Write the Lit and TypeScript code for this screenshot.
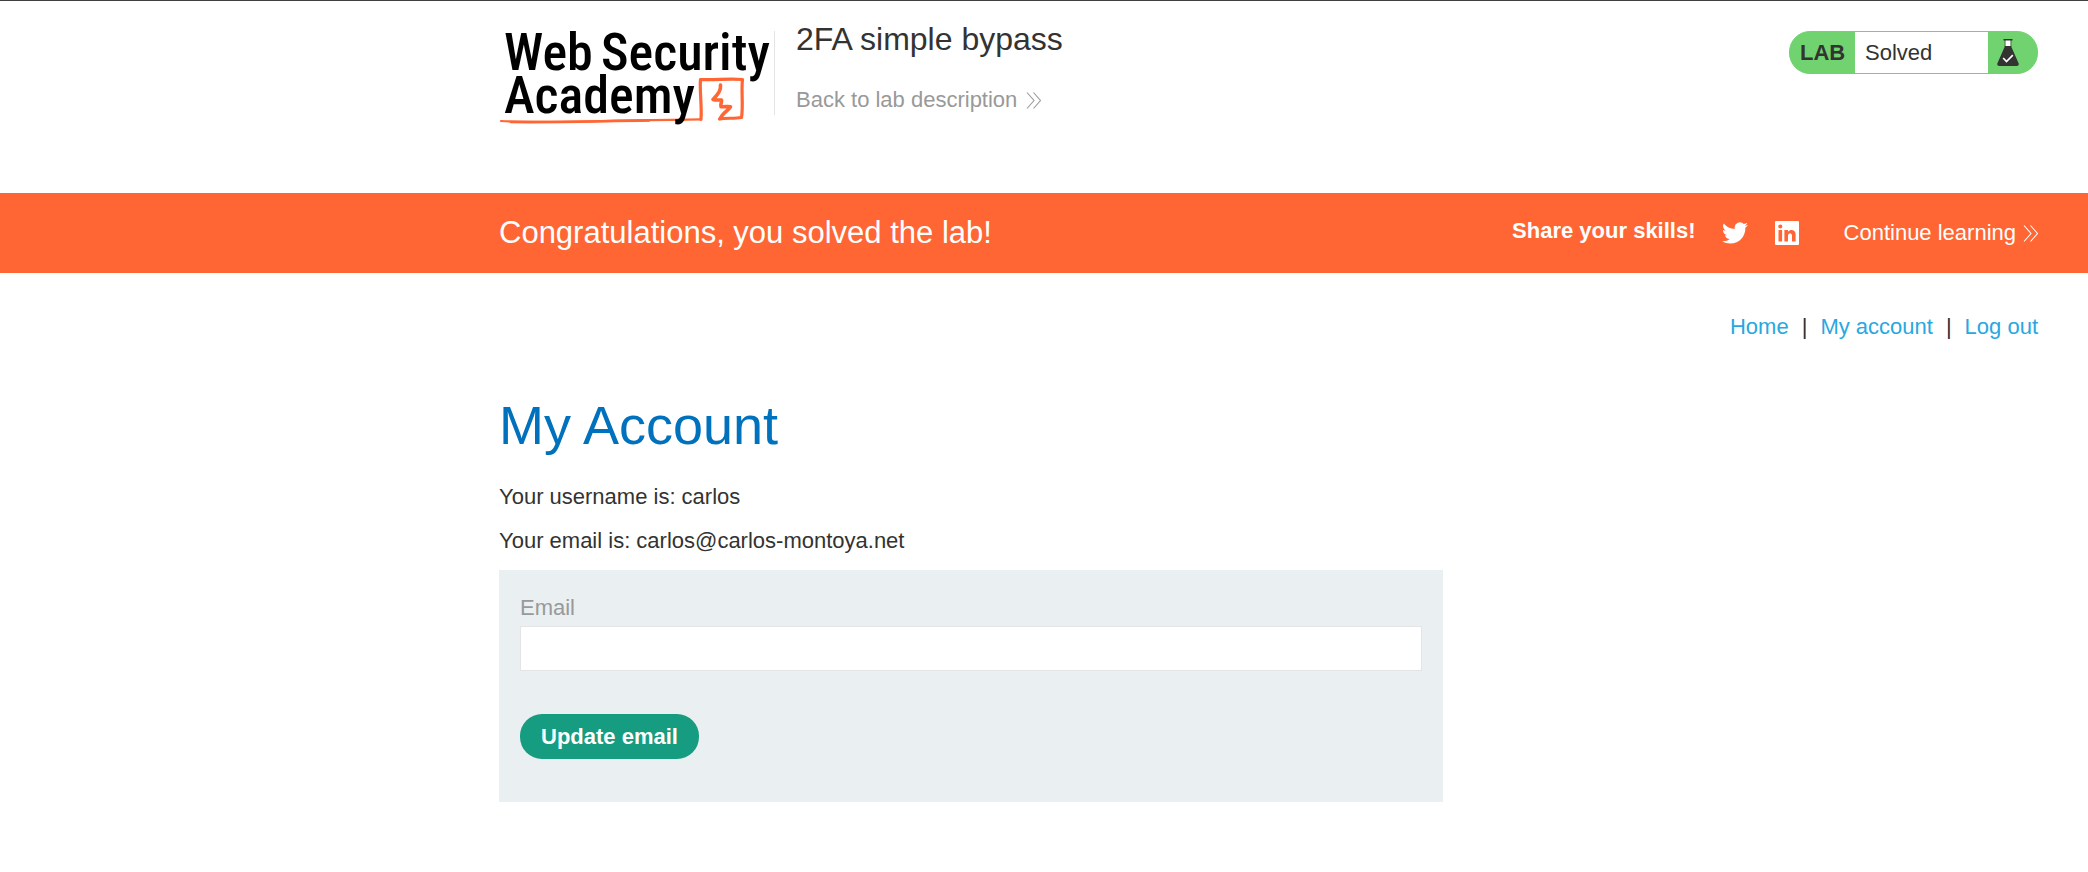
import { LitElement, html, css, svg } from "lit";
import { customElement, state } from "lit/decorators.js";

const chevrons = html`<svg class="chevrons" viewBox="0 0 15 17" aria-hidden="true">
  <path d="M1 .5 8 8.500 1 16.500M7.500 .5l7 8-7 8" fill="none" stroke="currentColor" stroke-width="1.100" />
</svg>`;

const scribble = svg`
  <g fill="none" stroke="#ff6633" stroke-linejoin="round" stroke-linecap="round">
    <path d="M2 90C50 92.500 130 89 202 88.300" stroke-width="2.200" />
    <path d="M12 91C60 91.600 100 90 150 89.400" stroke-width="2.600" />
    <path d="M202 88.300C203 75 200.500 60 201.500 48.500C215 49.500 230 47 243.500 48.500C242 60 244.500 74 242.500 86.500C235 88 227 86.500 220.500 88" stroke-width="3.200" />
    <path d="M221.500 54c.8 6-3.500 10-7.500 14.500 3 .8 6 .3 8.500 .6.500 2.500-1.500 4.500-.5 6.500 3.500 .4 6.500-.3 9.500 .2-2.500 4-8.500 6.500-10 11.500" stroke-width="3.600" />
  </g>`;

@customElement("app-root")
export class AppRoot extends LitElement {
  @state() private email = "";

  static styles = css`
    :host {
      display: block;
      min-height: 100vh;
      box-sizing: border-box;
      border-top: 1px solid #404040;
      background: #fff;
      color: #333332;
      font: 22px/30px "Liberation Sans", Arial, sans-serif;
    }
    * { box-sizing: border-box; }
    h1, h2, h3, h4, p { margin: 0; font-weight: 400; }
    a { text-decoration: none; color: inherit; }
    .container {
      max-width: 1589px;
      margin-left: auto;
      padding-right: 50px;
    }
    .header {
      display: flex;
      align-items: flex-start;
      padding-top: 30px;
      height: 192px;
    }
    .logo { display: block; flex: none; }
    .logo svg { display: block; width: 275px; height: 96px; overflow: visible; }
    .logo text {
      font-family: "Roboto Condensed", Roboto, sans-serif;
      font-weight: 500;
      font-size: 52px;
      fill: #000;
    }
    .title {
      flex: 1;
      height: 84px;
      padding-left: 21px;
      border-left: 1px solid #e4e4e4;
    }
    .title h2 { font-size: 32px; line-height: 36px; margin: -10px 0 28px; }
    .back { display: inline-flex; align-items: center; gap: 9px; color: #999; }
    .chevrons { width: 15px; height: 17px; }
    .status {
      display: flex;
      height: 43px;
      border: 1px solid #70d36f;
      border-radius: 21px;
      background: #70d36f;
      overflow: hidden;
      line-height: 41px;
    }
    .status strong { width: 65px; padding-left: 10px; }
    .status p { width: 133px; padding-left: 10px; background: #fff; }
    .flask { width: 49px; padding: 7px 0 0 9px; }
    .flask svg { display: block; width: 22px; height: 27px; }
    .banner { background: #ff6633; color: #fff; }
    .banner .container { display: flex; align-items: center; height: 80px; }
    .banner h4 { flex: 1; font-size: 31px; line-height: 36px; }
    .share { font-weight: 700; margin-right: 26px; padding-bottom: 4px; }
    .social { display: flex; gap: 26px; margin-right: 44px; }
    .social svg { display: block; width: 26px; height: 26px; }
    .continue { display: flex; align-items: center; gap: 7px; }
    .nav { display: flex; justify-content: flex-end; gap: 13px; padding: 39px 0 50px; }
    .nav a { color: #29a7df; }
    h1 { color: #0071bc; font-size: 54px; line-height: 66px; margin-bottom: 24px; }
    .details p { margin-bottom: 14px; }
    form {
      width: 61.340%;
      padding: 23px 21px 43px;
      background: #eaeff2;
    }
    label { display: block; color: #999; margin-bottom: 3px; }
    input {
      display: block;
      width: 100%;
      height: 45px;
      padding: 0 10px;
      border: 1px solid #e4e4e4;
      border-radius: 0;
      background: #fff;
      font: inherit;
      margin-bottom: 43px;
    }
    button {
      display: block;
      height: 45px;
      padding: 0 21px;
      border: 0;
      border-radius: 22px;
      background: #169c80;
      color: #fff;
      font: inherit;
      font-weight: 700;
    }
  `;

  render() {
    return html`
      <header class="container header">
        <a class="logo" href="#" aria-label="Web Security Academy">
          <svg viewBox="0 0 275 96">
            ${scribble}
            <text x="5" y="39">Web</text>
            <text x="102" y="39">Security</text>
            <text x="5" y="82">Academy</text>
          </svg>
        </a>
        <div class="title">
          <h2>2FA simple bypass</h2>
          <a class="back" href="#">Back to lab description ${chevrons}</a>
        </div>
        <div class="status">
          <strong>LAB</strong>
          <p>Solved</p>
          <span class="flask">
            <svg viewBox="0 0 22 27" aria-hidden="true">
              <path d="M8.500 1h5v7h-5z" fill="#fff" />
              <path d="M6.500 0h9v1.500h-9zM8 7h6l7.700 17.500q.6 2.500-2 2.500H2.300q-2.600 0-2-2.500z" fill="#333332" />
              <path d="M8 1v7M14 1v7" stroke="#333332" stroke-width=".6" />
              <path d="M6.200 19 9.500 22.500 15.800 16.200" fill="none" stroke="#fff" stroke-width="1.700" />
            </svg>
          </span>
        </div>
      </header>
      <section class="banner">
        <div class="container">
          <h4>Congratulations, you solved the lab!</h4>
          <span class="share">Share your skills!</span>
          <div class="social">
            <a href="#" aria-label="Twitter">
              <svg viewBox="0 0 24 24" fill="currentColor">
                <path d="M23.950 4.570a10 10 0 0 1-2.820.77 4.960 4.960 0 0 0 2.160-2.720c-.950.550-2 .960-3.130 1.180a4.920 4.920 0 0 0-8.380 4.480C7.690 8.100 4.070 6.130 1.640 3.160a4.920 4.920 0 0 0 1.520 6.570 4.900 4.900 0 0 1-2.230-.61v.06a4.920 4.920 0 0 0 3.950 4.830 5 5 0 0 1-2.210.08 4.940 4.940 0 0 0 4.600 3.420A9.870 9.870 0 0 1 0 19.540a14 14 0 0 0 7.550 2.210c9.050 0 14-7.500 14-13.980 0-.21 0-.42-.02-.63a9.940 9.940 0 0 0 2.420-2.570z" />
              </svg>
            </a>
            <a href="#" aria-label="LinkedIn">
              <svg viewBox="0 0 26 26" fill="currentColor">
                <path fill-rule="evenodd" d="M2 1h22q1 0 1 1v22q0 1-1 1H2q-1 0-1-1V2q0-1 1-1zM4.500 10h3.600v11.400H4.500zM6.300 4.400a2.050 2.050 0 1 0 0 4.100 2.050 2.050 0 0 0 0-4.100zM10.400 10v11.400H14v-5.700c0-3.300 4-3.400 4 0v5.700h3.600v-6.900c0-5.400-5.600-5.700-7.600-2.800V10z" />
              </svg>
            </a>
          </div>
          <a class="continue" href="#">Continue learning ${chevrons}</a>
        </div>
      </section>
      <main class="container">
        <nav class="nav">
          <a href="#">Home</a><span>|</span><a href="#">My account</a><span>|</span><a href="#">Log out</a>
        </nav>
        <h1>My Account</h1>
        <div class="details">
          <p>Your username is: carlos</p>
          <p>Your email is: carlos@carlos-montoya.net</p>
        </div>
        <form @submit=${(e: Event) => e.preventDefault()}>
          <label for="email">Email</label>
          <input id="email" type="email" .value=${this.email}
            @input=${(e: Event) => (this.email = (e.target as HTMLInputElement).value)} />
          <button type="submit">Update email</button>
        </form>
      </main>
    `;
  }
}
